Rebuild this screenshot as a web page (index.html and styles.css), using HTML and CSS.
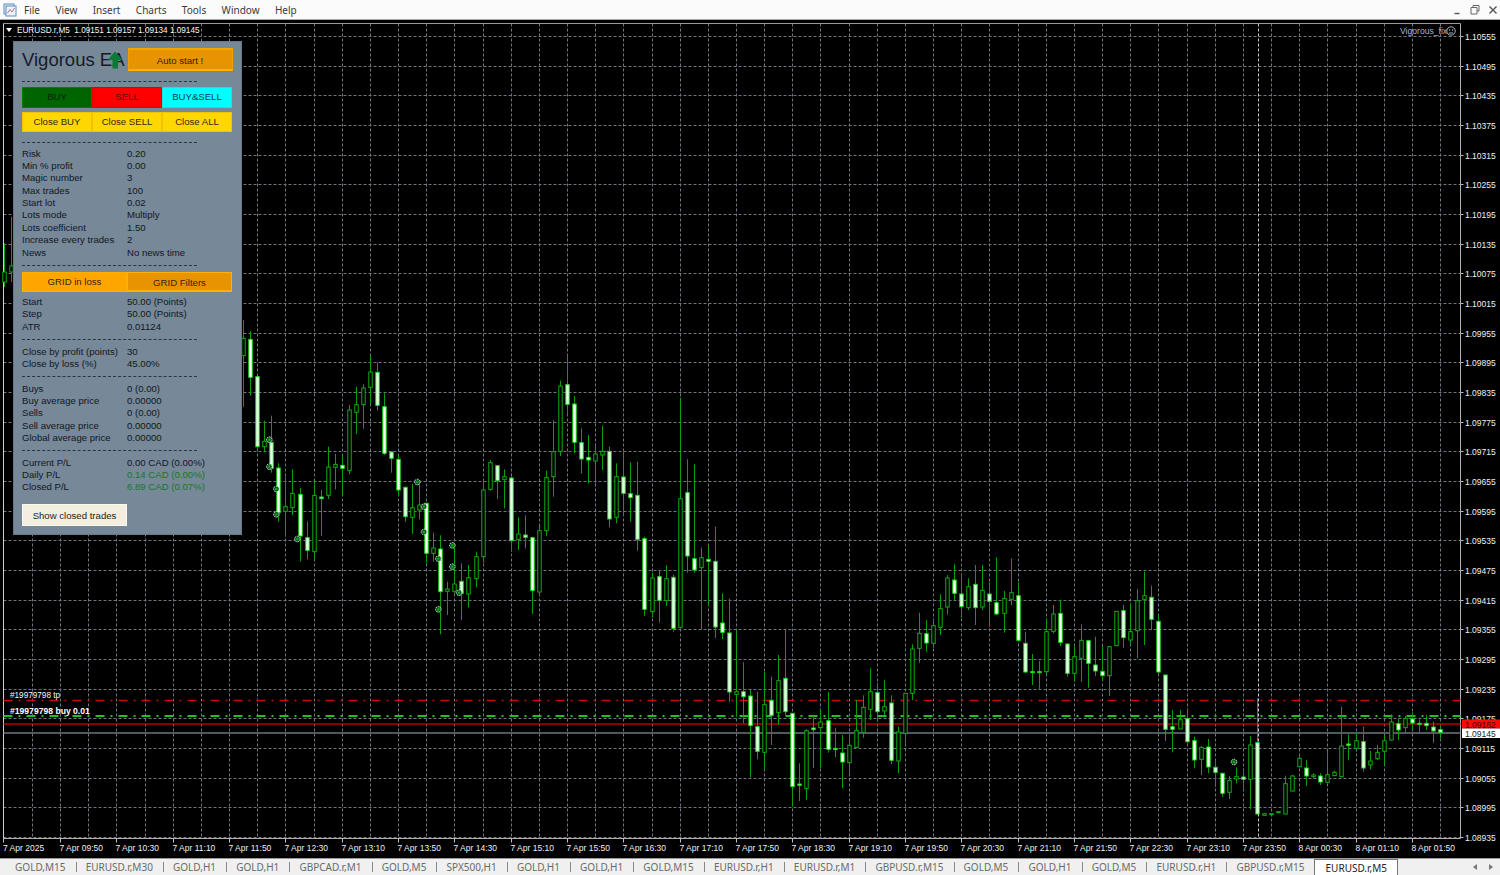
FILE: index.html
```html
<!DOCTYPE html>
<html lang="en">
<head>
<meta charset="utf-8">
<title>EURUSD.r,M5</title>
<link rel="stylesheet" href="styles.css">
</head>
<body>
<div class="app">
  <header class="menubar">
    <svg class="app-icon" viewBox="0 0 14 14" width="14" height="14"><rect x="1" y="1" width="10" height="10" fill="#dfeaf6" stroke="#5f8fc4"/><rect x="3" y="3" width="10" height="10" fill="#eef4fb" stroke="#5f8fc4"/><path d="M4.5 10 L7 6.5 L9 9 L11.5 5" fill="none" stroke="#c9667a" stroke-width="1"/></svg>
    <nav class="menu">
      <span class="menu-item">File</span>
      <span class="menu-item">View</span>
      <span class="menu-item">Insert</span>
      <span class="menu-item">Charts</span>
      <span class="menu-item">Tools</span>
      <span class="menu-item">Window</span>
      <span class="menu-item">Help</span>
    </nav>
    <div class="win-buttons">
      <svg class="win-btn" viewBox="0 0 12 12" width="12" height="12"><path d="M3.5 9.5H8.5" stroke="#555" stroke-width="1.4"/></svg>
      <svg class="win-btn" viewBox="0 0 12 12" width="12" height="12"><path d="M4 3.5V1.5H10V7H8M2 3.5H8V10H2Z" fill="none" stroke="#666" stroke-width="1"/></svg>
      <svg class="win-btn" viewBox="0 0 12 12" width="12" height="12"><path d="M2.5 2.5L9.5 9.5M9.5 2.5L2.5 9.5" stroke="#555" stroke-width="1.4"/></svg>
    </div>
  </header>

  <main class="chart-window">
    <svg id="chart" class="chart" width="1500" height="838" viewBox="0 20 1500 838"></svg>

    <section class="panel">
      <div class="panel-head">
        <div class="title-wrap">
          <span class="title">Vigorous EA</span>
          <svg class="title-arrow" viewBox="0 0 16 18" width="16" height="18"><path d="M8 0.5 L15.5 9 L11 9 L11 17.5 L5.5 17.5 L5.5 9 L0.5 9 Z" fill="#0b7a35"/></svg>
        </div>
        <button class="btn btn-auto">Auto start !</button>
      </div>
      <div class="sep"></div>
      <div class="btn-row btn-row-first">
        <button class="btn btn-buy">BUY</button>
        <button class="btn btn-sell">SELL</button>
        <button class="btn btn-both">BUY&amp;SELL</button>
      </div>
      <div class="btn-row">
        <button class="btn btn-close">Close BUY</button>
        <button class="btn btn-close">Close SELL</button>
        <button class="btn btn-close">Close ALL</button>
      </div>
      <div class="sep sep-b"></div>
      <dl class="rows">
        <dt>Risk</dt><dd>0.20</dd>
        <dt>Min % profit</dt><dd>0.00</dd>
        <dt>Magic number</dt><dd>3</dd>
        <dt>Max trades</dt><dd>100</dd>
        <dt>Start lot</dt><dd>0.02</dd>
        <dt>Lots mode</dt><dd>Multiply</dd>
        <dt>Lots coefficient</dt><dd>1.50</dd>
        <dt>Increase every trades</dt><dd>2</dd>
        <dt>News</dt><dd>No news time</dd>
      </dl>
      <div class="sep"></div>
      <div class="tab-row">
        <button class="btn btn-grid-on">GRID in loss</button>
        <button class="btn btn-grid-off">GRID Filters</button>
      </div>
      <dl class="rows">
        <dt>Start</dt><dd>50.00 (Points)</dd>
        <dt>Step</dt><dd>50.00 (Points)</dd>
        <dt>ATR</dt><dd>0.01124</dd>
      </dl>
      <div class="sep sep-c"></div>
      <dl class="rows">
        <dt>Close by profit (points)</dt><dd>30</dd>
        <dt>Close by loss (%)</dt><dd>45.00%</dd>
      </dl>
      <div class="sep"></div>
      <dl class="rows">
        <dt>Buys</dt><dd>0 (0.00)</dd>
        <dt>Buy average price</dt><dd>0.00000</dd>
        <dt>Sells</dt><dd>0 (0.00)</dd>
        <dt>Sell average price</dt><dd>0.00000</dd>
        <dt>Global average price</dt><dd>0.00000</dd>
      </dl>
      <div class="sep"></div>
      <dl class="rows">
        <dt>Current P/L</dt><dd>0.00 CAD (0.00%)</dd>
        <dt>Daily P/L</dt><dd class="pos">0.14 CAD (0.00%)</dd>
        <dt>Closed P/L</dt><dd class="pos">6.89 CAD (0.07%)</dd>
      </dl>
      <button class="btn btn-show">Show closed trades</button>
    </section>
  </main>

  <nav class="tabs">
    <span class="tab">GOLD,M15</span>
    <span class="tab">EURUSD.r,M30</span>
    <span class="tab">GOLD,H1</span>
    <span class="tab">GOLD,H1</span>
    <span class="tab">GBPCAD.r,M1</span>
    <span class="tab">GOLD,M5</span>
    <span class="tab">SPX500,H1</span>
    <span class="tab">GOLD,H1</span>
    <span class="tab">GOLD,H1</span>
    <span class="tab">GOLD,M15</span>
    <span class="tab">EURUSD.r,H1</span>
    <span class="tab">EURUSD.r,M1</span>
    <span class="tab">GBPUSD.r,M15</span>
    <span class="tab">GOLD,M5</span>
    <span class="tab">GOLD,H1</span>
    <span class="tab">GOLD,M5</span>
    <span class="tab">EURUSD.r,H1</span>
    <span class="tab">GBPUSD.r,M15</span>
    <span class="tab tab-active">EURUSD.r,M5</span>
    <div class="tab-arrows">
      <svg viewBox="0 0 8 8" width="8" height="8"><path d="M6 1 L2 4 L6 7 Z" fill="#777"/></svg>
      <svg viewBox="0 0 8 8" width="8" height="8"><path d="M2 1 L6 4 L2 7 Z" fill="#777"/></svg>
    </div>
  </nav>
</div>
<script src="chart.js"></script>
</body>
</html>
```
FILE: styles.css
```css
* { box-sizing: border-box; }
html, body { margin: 0; padding: 0; height: 100%; overflow: hidden; background: #000; }
body { font-family: "Liberation Sans", Arial, sans-serif; }

.app { width: 1500px; height: 875px; display: flex; flex-direction: column; }

/* Menu bar */
.menubar {
  height: 20px; flex: none; display: flex; align-items: center;
  background: #fbfbfb; border-bottom: 1px solid #a8a8a8;
  font-family: "Noto Sans", "Open Sans", sans-serif; font-size: 10px; color: #3a3a3a;
}
.app-icon { margin-left: 3px; flex: none; }
.menu { display: flex; gap: 15.4px; margin-left: 7px; }
.win-buttons { margin-left: auto; display: flex; gap: 6px; padding-right: 1px; }
.win-btn { display: block; }

/* Chart */
.chart-window { position: relative; flex: none; height: 838px; background: #000; overflow: hidden; }
.chart { display: block; font-family: "Liberation Sans", Arial, sans-serif; }
.ax { font-size: 8.5px; fill: #eef1f4; }
.lbl { font-size: 8.2px; fill: #f8f8f8; white-space: pre; }
.lbl-bold { font-size: 8.6px; fill: #fff; font-weight: bold; }
.brand { font-size: 8.6px; fill: #a9b6c4; }
.tag-red { fill: #4a0000; }
.tag-white { fill: #222; }

/* EA panel */
.panel {
  position: absolute; left: 13px; top: 21px; width: 228.5px; height: 494px;
  background: #778899; border: 1px solid #66778a; padding: 6px 8px 0;
  color: #10171f; font-size: 9.6px; display: flex; flex-direction: column;
}
.panel-head { display: flex; justify-content: space-between; height: 23px; align-items: stretch; }
.title-wrap { position: relative; width: 105px; overflow: visible; }
.title { font-size: 18.5px; color: #131c26; line-height: 23px; white-space: nowrap; }
.title-arrow { position: absolute; left: 85px; top: 3px; }
.sep { height: 0; width: 175px; border-top: 1px dashed #2c3540; margin: 5.5px 0; flex: none; }
.sep-b { margin-top: 9.5px; margin-bottom: 5px; }
.sep-c { margin-top: 6.1px; }
.panel-head + .sep { margin-top: 10px; margin-bottom: 5px; }

.btn {
  font: inherit; color: #1c1c1c; padding: 0; margin: 0; cursor: default;
  border: 1px solid transparent; display: block;
}
.btn-auto { width: 105px; padding-top: 2px; background: #e89400; border-color: #f0a000; border-bottom: 2px solid #ffb000; border-top: 2px solid #f2a400; color: #2c1e08; }
.btn-row { display: grid; grid-template-columns: 70px 70px 70px; height: 20.5px; }
.btn-row-first { margin-bottom: 4px; }
.btn-buy, .btn-sell, .btn-both { padding-bottom: 1px; }
.btn-buy { background: #006400; border-color: #0a7a0a; color: #062006; }
.btn-sell { background: #ff0000; border-color: #e00000; color: #520808; }
.btn-both { background: #00ffff; border-color: #22dddd; color: #0c3a4a; }
.btn-close { background: #ffd700; border-color: #f2c200; color: #33280a; }

.rows { margin: 0; display: grid; grid-template-columns: 105px 1fr; grid-auto-rows: 12.4px; line-height: 12.4px; white-space: nowrap; flex: none; }
.rows dt, .rows dd { margin: 0; }
.pos { color: #14782a; }

.tab-row { display: grid; grid-template-columns: 105px 105px; height: 20px; margin: 1px 0 4px; }
.btn-grid-on { background: #ffa500; border-color: #ffb100; color: #33260a; height: 20px; padding-bottom: 1px; }
.btn-grid-off { background: #e89400; border-color: #ffb000; border-width: 1px 1px 2px 1px; color: #33260a; height: 20px; padding-top: 1px; }
.btn-show {
  width: 105px; height: 22px; background: #f3eedf; margin-top: 10.4px;
  border-color: #fbf8ef; color: #1c1c1c;
}

/* Tabs */
.tabs {
  flex: 1; display: flex; align-items: stretch; background: #f0f0f0;
  border-top: 1px solid #9a9a9a; padding-left: 5px; white-space: nowrap;
  font-family: "Noto Sans", "Open Sans", sans-serif; font-size: 10px; color: #6a6a6a;
}
.tab { display: flex; align-items: center; padding: 0 10.08px; position: relative; }
.tab + .tab::before { content: ""; position: absolute; left: 0; top: 3px; bottom: 3px; width: 1px; background: #8a8a8a; }
.tab-active { background: #fff; color: #222; border: 1px solid #777; border-bottom: 0; }
.tab-active::before, .tab-active + .tab::before { display: none; }
.tab-arrows { margin-left: auto; display: flex; gap: 8px; align-items: center; padding-right: 5px; }
```
FILE: chart.js
```js
(function () {
  var NS = 'http://www.w3.org/2000/svg';
  var svg = document.getElementById('chart');
  function el(tag, attrs, text) {
    var e = document.createElementNS(NS, tag);
    for (var k in attrs) e.setAttribute(k, attrs[k]);
    if (text !== undefined) e.textContent = text;
    svg.appendChild(e);
    return e;
  }
  function line(x1, y1, x2, y2, color, w, dash) {
    var a = { x1: x1, y1: y1, x2: x2, y2: y2, stroke: color, 'stroke-width': w || 1 };
    if (dash) a['stroke-dasharray'] = dash;
    el('line', a);
  }
  var L = 3.5, R = 1460.5, T = 23.5, B = 838.5;
  var STEP = 7.04, X0 = 32;

  /* Grid */
  var GRID = '#6f767e';
  var k, y, x;
  for (k = 0; k < 28; k++) {
    y = Math.round(36 + 29.67 * k) + 0.5;
    line(L, y, R, y, GRID, 1, '3 2');
    line(R, y, R + 3, y, '#b8b8b8', 1);
    el('text', { x: 1465, y: y + 3, 'class': 'ax' }, (1.10555 - 0.0006 * k).toFixed(5));
  }
  for (k = 0; k <= 50; k++) {
    x = Math.round(X0 + 28.16 * k) + 0.5;
    line(x, T, x, B, GRID, 1, '3 2');
  }
  /* period separator */
  line(1258.5, T, 1258.5, B, '#c8ccd0', 1, '3 2');

  /* Frame */
  line(L, T, R, T, '#9a9a9a', 1);
  line(L, T, L, B, '#d0d0d0', 1);
  line(R, T, R, B, '#b0b0b0', 1);
  line(L, B, R, B, '#b0b0b0', 1);

  /* Order / price lines */
  line(L, 700.5, R, 700.5, '#c80a0a', 1.4, '9 6 2 6');
  line(L, 716, R, 716, '#1fc01f', 2, '9 6 2 6');
  line(L, 724, R, 724, '#b30000', 1.6);
  line(L, 733, R, 733, '#6d7680', 1.4);

  /* Candles: [hi, top, bottom, lo, white?] in zoom units, y = y0 + v/3 */
  var W = 1, H = 0;
  var groups = [
    { j: -4, y0: 0, s: 1, d: [[243,272,282,287,H],[217,266,272,282,H]] },
    { j: 30, y0: 330, s: 3, d: [
      [-30,25,77,230,H],[3,28,142,197,W],[140,140,350,360,W],[272,334,350,367,H],[257,337,415,428,W],
      [400,414,548,575,W],[440,530,544,620,H],[418,490,533,555,H],[473,493,618,695,W],[575,623,661,688,W],
      [456,496,665,688,H],[480,501,506,618,W],[350,411,496,507,H],[372,403,412,478,H],[376,406,415,495,W],
      [225,240,422,433,H],[170,224,247,312,H],[163,174,224,296,H],[77,126,172,223,H],[97,127,226,241,W],
      [190,230,370,375,W],[365,366,385,428,W],[378,388,480,497,W],[470,472,560,575,W],[462,533,562,612,H],
      [455,525,540,568,H],[518,520,670,698,W],[608,654,670,695,H],[616,657,785,913,W],[755,777,784,855,H],
      [640,762,784,790,H],[700,754,790,870,W],[705,743,792,832,H],[665,680,746,772,H],[450,480,680,698,H]
    ]},
    { j: 65, y0: 350, s: 3, d: [
      [330,338,418,422,H],[345,347,392,447,W],[358,380,388,475,H],[380,384,572,605,W],[502,552,568,600,H],
      [496,555,562,595,W],[560,563,722,792,W],[525,542,726,737,H],[362,383,542,558,H],[210,305,380,440,H],
      [92,108,304,318,H],[15,104,163,195,W],[138,162,277,310,W],[235,278,327,370,W],[255,322,330,400,W],
      [280,312,333,400,H],[227,304,315,360,H],[290,304,507,532,W],[340,380,502,520,H],[305,381,430,497,W],
      [337,431,443,515,W],[335,436,568,602,W],[560,566,778,798,W],[668,684,785,803,H],[660,680,751,817,W],
      [646,686,752,768,H],[675,682,835,845,W],[143,446,832,835,H],[328,428,618,668,W],[343,626,660,668,W],
      [593,623,653,838,H],[588,628,634,767,W],[530,634,831,864,W],[730,819,847,867,W]
    ]},
    { j: 99, y0: 350, s: 3, d: [[746,849,1026,1056,W]] },
    { j: 100, y0: 550, s: 3, d: [
      [240,425,433,500,H],[337,425,440,520,W],[420,438,527,682,W],[426,530,604,628,W],[366,464,607,660,H],
      [380,451,496,585,W],[315,392,488,525,H],[238,385,485,497,W],[490,490,710,770,W],[640,702,706,753,W],
      [538,542,716,750,H],[497,534,539,654,W],[478,516,533,655,H],[426,512,598,608,W],[533,595,599,622,W],
      [555,609,636,714,W],[550,586,638,674,H],[450,541,592,593,H],[436,472,547,563,H],[355,425,478,510,H],
      [398,428,485,515,W],[390,470,483,495,H],[436,459,631,642,W],[530,546,633,670,H],[430,430,550,580,H],
      [283,297,430,450,H],[188,250,295,338,H],[210,251,279,305,W],[208,227,280,293,H],[133,176,232,255,H],
      [75,84,171,193,H],[43,90,130,150,W],[70,132,170,203,W],[85,110,173,180,H],[45,103,173,225,W],
      [45,121,171,180,H],[97,132,154,230,W],[22,158,192,195,W],[123,145,190,248,H],[25,128,148,165,H],
      [97,137,271,275,W]
    ]},
    { j: 141, y0: 560, s: 3, d: [
      [215,250,336,338,W],[282,335,338,375,W],[303,335,337,390,W],[178,215,335,342,H],[135,162,214,220,H],
      [120,160,247,258,W],[250,252,340,350,W],[260,290,340,365,H],[193,241,295,365,H],[240,242,310,383,W],
      [230,315,333,348,W],[258,334,347,362,W],[258,260,347,408,H],[153,154,257,258,H],[135,152,233,263,W],
      [130,215,240,250,H],[87,122,212,295,H],[35,107,118,255,H],[77,112,178,210,W],[165,184,336,340,W],
      [345,345,508,543,W],[450,500,508,577,W],[450,479,507,507,H],[448,476,545,550,W],[530,542,600,625,W],
      [558,562,598,645,H],[537,561,621,640,W],[600,622,637,680,W],[638,640,700,710,W],[648,661,697,717,H],
      [622,650,657,670,H],[635,651,658,690,W],[528,555,658,748,H],[415,548,762,764,W],[760,761,766,768,H],
      [760,761,763,764,H],[754,755,757,758,H],[647,671,762,763,H],[645,648,693,694,H]
    ]},
    { j: 180, y0: 680, s: 3, d: [
      [230,235,260,262,H],[240,264,288,318,W],[280,285,290,296,H],[280,288,306,315,W],[213,284,307,310,H],
      [273,277,287,288,H],[80,198,290,292,H],[163,192,196,240,W],[160,182,205,208,H],[140,185,264,275,W],
      [213,243,255,268,H],[195,217,236,240,H],[165,182,214,255,H],[103,126,180,182,H],[115,131,150,180,W],
      [108,115,143,162,H],[97,117,129,150,W],[118,130,133,157,W],[105,130,137,150,W],[125,141,153,188,W],
      [135,149,157,175,W]
    ]}
  ];
  var GREEN = '#0c9e0c', EDGE = '#0fae0f';
  groups.forEach(function (g) {
    g.d.forEach(function (c, i) {
      var cx = Math.round(X0 + STEP * (g.j + i)) + 0.5;
      var hi = g.y0 + c[0] / g.s, top = g.y0 + c[1] / g.s, bot = g.y0 + c[2] / g.s, lo = g.y0 + c[3] / g.s;
      if (g.j + i < 0) { cx = g.j + i === -4 ? 4.5 : 11.5; }
      line(cx, hi, cx, lo, GREEN, 1);
      var h = Math.max(bot - top, 1);
      el('rect', {
        x: cx - 1.7, y: top, width: 3.4, height: h,
        fill: c[4] ? '#fff' : '#000',
        stroke: c[4] ? '#17e017' : EDGE, 'stroke-width': 1
      });
    });
  });

  /* Arrow markers */
  var marks = [[88,329],[88,410],[109,477],[109,553],[172,627],[532,456],[552,530],[552,606],
    [595,686],[595,838],[637,646],[637,710],[657,788]];
  var pts = marks.map(function (m) { return [240 + m[0] / 3, 330 + m[1] / 3]; });
  pts.push([1234, 762]);
  pts.forEach(function (p) {
    el('circle', { cx: p[0], cy: p[1], r: 2.8, fill: '#0a5a20', stroke: '#e0e0e0', 'stroke-width': 1, 'stroke-dasharray': '1.6 0.9' });
    el('rect', { x: p[0] - 1, y: p[1] - 1, width: 2, height: 2, fill: '#12b012' });
  });

  /* Time axis */
  var times = ['7 Apr 09:50','7 Apr 10:30','7 Apr 11:10','7 Apr 11:50','7 Apr 12:30','7 Apr 13:10','7 Apr 13:50',
    '7 Apr 14:30','7 Apr 15:10','7 Apr 15:50','7 Apr 16:30','7 Apr 17:10','7 Apr 17:50','7 Apr 18:30','7 Apr 19:10',
    '7 Apr 19:50','7 Apr 20:30','7 Apr 21:10','7 Apr 21:50','7 Apr 22:30','7 Apr 23:10','7 Apr 23:50','8 Apr 00:30',
    '8 Apr 01:10','8 Apr 01:50'];
  line(L, B, L, B + 4, '#c0c0c0', 1);
  el('text', { x: 3, y: 850.5, 'class': 'ax' }, '7 Apr 2025');
  times.forEach(function (t, i) {
    var tx = Math.round(60 + 56.33 * i) + 0.5;
    line(tx, B, tx, B + 4, '#c0c0c0', 1);
    el('text', { x: tx - 1, y: 850.5, 'class': 'ax' }, t);
  });

  /* Chart labels */
  el('path', { d: 'M6 28 L12 28 L9 32 Z', fill: '#fff' });
  el('text', { x: 17, y: 33, 'class': 'lbl' }, 'EURUSD.r,M5  1.09151 1.09157 1.09134 1.09145');
  el('text', { x: 1400, y: 34, 'class': 'brand' }, 'Vigorous_fix');
  el('circle', { cx: 1451, cy: 31, r: 4.2, fill: 'none', stroke: '#a9b6c4', 'stroke-width': 1 });
  el('circle', { cx: 1449.5, cy: 30, r: 0.7, fill: '#a9b6c4' });
  el('circle', { cx: 1452.5, cy: 30, r: 0.7, fill: '#a9b6c4' });
  el('path', { d: 'M1449 33 H1453', stroke: '#a9b6c4', 'stroke-width': 1 });
  el('text', { x: 10, y: 698, 'class': 'lbl' }, '#19979798 tp');
  el('text', { x: 10, y: 714, 'class': 'lbl-bold' }, '#19979798 buy 0.01');

  /* Price tags */
  el('rect', { x: 1462, y: 719.5, width: 38, height: 9, fill: '#f80b0b' });
  el('text', { x: 1465, y: 727.5, 'class': 'ax tag-red' }, '1.09162');
  el('rect', { x: 1462, y: 728.5, width: 38, height: 9.5, fill: '#ffffff' });
  el('text', { x: 1465, y: 736.5, 'class': 'ax tag-white' }, '1.09145');
})();
```
